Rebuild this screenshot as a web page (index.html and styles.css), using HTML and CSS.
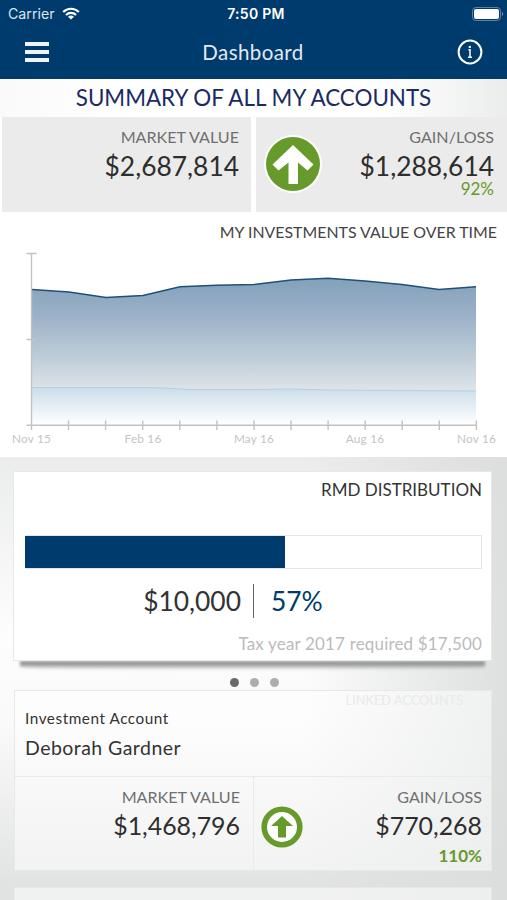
FILE: index.html
```html
<!DOCTYPE html>
<html lang="en">
<head>
  <meta charset="UTF-8">
  <meta name="viewport" content="width=device-width, initial-scale=1.0">
  <title>Dashboard</title>
  <link rel="stylesheet" href="styles.css">
</head>
<body>
  <header class="header">
    <div class="status">
      <div class="carrier">
        <span>Carrier</span>
        <svg width="18" height="13" viewBox="0 0 18 13" fill="none" stroke="#fff" stroke-width="2.2">
          <path d="M1.2 5A11 11 0 0 1 16.8 5M4 8A7 7 0 0 1 14 8"/>
          <path d="M9 12.6L6 9.8A4.4 4.4 0 0 1 12 9.8Z" fill="#fff" stroke="none"/>
        </svg>
      </div>
      <span class="time">7:50 PM</span>
      <svg class="battery" width="32" height="14" viewBox="0 0 32 14">
        <rect x=".5" y=".5" width="28" height="13" rx="3.5" fill="none" stroke="#5f82a4"/>
        <rect x="2" y="2" width="25" height="10" rx="2" fill="#fff"/>
        <path d="M30 5v4c1.6-.8 1.6-3.2 0-4z" fill="#7f9bb8"/>
      </svg>
    </div>
    <nav class="nav">
      <div class="menu"><i></i><i></i><i></i></div>
      <h1 class="nav-title">Dashboard</h1>
      <svg class="info" width="26" height="26" viewBox="0 0 26 26">
        <circle cx="13" cy="13" r="11.4" fill="none" stroke="#fff" stroke-width="2"/>
        <path d="M11.4 10.8h1.6v7.4M11 18.2h4" fill="none" stroke="#fff" stroke-width="1.5"/>
        <circle cx="12.8" cy="7.9" r="1.2" fill="#fff"/>
      </svg>
    </nav>
  </header>

  <h2 class="summary-title"><span>SUMMARY OF ALL MY ACCOUNTS</span></h2>

  <div class="stats">
    <div class="stat">
      <div class="label">MARKET VALUE</div>
      <div class="value">$2,687,814</div>
    </div>
    <div class="stat stat-gain">
      <svg width="58" height="58" viewBox="0 0 58 58">
        <circle cx="29" cy="29" r="29" fill="#fff"/>
        <circle cx="29" cy="29" r="27" fill="#669a2a"/>
        <path d="M29 10L49.5 29.5L43.5 35.5L34 27.5V49H24.5V27.5L14.500 35.5L8.5 29.5Z" fill="#fff"/>
      </svg>
      <div>
        <div class="label">GAIN/LOSS</div>
        <div class="value">$1,288,614</div>
        <div class="percent">92%</div>
      </div>
    </div>
  </div>

  <section class="chart">
    <h3 class="chart-title">MY INVESTMENTS VALUE OVER TIME</h3>
    <svg width="507" height="215" viewBox="0 242 507 215">
      <defs>
        <linearGradient id="total" gradientUnits="userSpaceOnUse" x1="0" y1="278" x2="0" y2="425">
          <stop offset="0" stop-color="#82a1ba"/>
          <stop offset=".25" stop-color="#9bb1c8"/>
          <stop offset=".5" stop-color="#b9c9d6"/>
          <stop offset=".75" stop-color="#dce3e8"/>
          <stop offset="1" stop-color="#fff"/>
        </linearGradient>
        <linearGradient id="invested" x1="0" y1="0" x2="0" y2="1">
          <stop offset="0" stop-color="#cbdde9"/>
          <stop offset="1" stop-color="#fff"/>
        </linearGradient>
      </defs>
      <path d="M32 289.5L69 292L106 297.5L143 295.5L180 286.8L217 285.2L254 284.5L291 280L328 278.2L365 281L402 284.5L439 289.5L476 286.8V425H32Z" fill="url(#total)"/>
      <path d="M32 387.5H153L190 389.5L254 389.5L291 389L328 390L476 391V425H32Z" fill="url(#invested)"/>
      <path d="M32 387.5H153L190 389.5L254 389.5L291 389L328 390L476 391" fill="none" stroke="#b4d0e5"/>
      <path d="M32 289.5L69 292L106 297.5L143 295.5L180 286.8L217 285.2L254 284.5L291 280L328 278.2L365 281L402 284.5L439 289.5L476 286.8" fill="none" stroke="#204f7c" stroke-width="1.5"/>
      <g stroke="#c2c2c2" stroke-width="1.4">
        <path d="M31.5 253V430M26.5 253.5H36.5M26.5 339.5H36.5M26.5 425.3H477"/>
        <path d="M68.5 420.5v9.5M105.6 420.5v9.5M142.7 420.5v9.5M179.8 420.5v9.5M216.9 420.5v9.5M254 420.5v9.5M291 420.5v9.5M328.1 420.5v9.5M365.2 420.5v9.5M402.2 420.5v9.5M439.3 420.5v9.5M476.4 420.5v9.5"/>
      </g>
      <g class="axis-labels">
        <text x="31.5" y="443">Nov 15</text>
        <text x="143" y="443">Feb 16</text>
        <text x="254" y="443">May 16</text>
        <text x="365" y="443">Aug 16</text>
        <text x="476.5" y="443">Nov 16</text>
      </g>
    </svg>
  </section>

  <main class="panel">
    <section class="card rmd">
      <h3 class="rmd-title">RMD DISTRIBUTION</h3>
      <div class="bar"><div class="bar-fill" style="width: 57.1%"></div></div>
      <div class="amounts">
        <span class="amount">$10,000</span>
        <span class="share">57%</span>
      </div>
      <div class="note">Tax year 2017 required $17,500</div>
    </section>
    <div class="dots"><i class="active"></i><i></i><i></i></div>

    <section class="card account">
      <div class="ghost">LINKED ACCOUNTS</div>
      <div class="owner">
        <div class="type">Investment Account</div>
        <div class="name">Deborah Gardner</div>
      </div>
      <div class="figures">
        <div class="figure">
          <div class="label">MARKET VALUE</div>
          <div class="value">$1,468,796</div>
        </div>
        <div class="figure figure-gain">
          <svg width="42" height="42" viewBox="0 0 42 42">
            <circle cx="21" cy="21" r="17.8" fill="#fff" stroke="#669a2a" stroke-width="5.6"/>
            <path d="M21 10L32 20H25V31.5H17V20H10Z" fill="#669a2a"/>
          </svg>
          <div>
            <div class="label">GAIN/LOSS</div>
            <div class="value">$770,268</div>
            <div class="percent">110%</div>
          </div>
        </div>
      </div>
    </section>
    <section class="card next"></section>
  </main>
</body>
</html>
```
FILE: styles.css
```css
* { box-sizing: border-box; }
body { margin: 0; height: 900px; overflow: hidden; font-family: Lato, sans-serif; color: #333; background: #fff; }
h1, h2, h3 { margin: 0; font-weight: normal; }
svg { display: block; flex: none; }

.header { height: 79px; background: #003b6d; color: #fff; }
.status { display: grid; grid-template-columns: 1fr auto 1fr; align-items: center; height: 27px; padding: 0 6px 0 8px; font: 14.2px/27px Inter, sans-serif; }
.carrier { display: flex; align-items: center; gap: 7px; color: #dbe5ee; }
.time { margin-left: 3px; font-size: 14px; font-weight: 600; letter-spacing: .3px; }
.battery { justify-self: end; margin-right: -3px; }
.nav { display: flex; align-items: center; justify-content: space-between; height: 50px; padding: 0 24px 0 25px; }
.menu { display: flex; flex-direction: column; gap: 4px; width: 24px; }
.menu i { height: 4px; background: #eef3f8; }
.nav-title { font-size: 20.5px; line-height: 46px; letter-spacing: .4px; color: #e0e9f2; }

.summary-title { height: 38px; padding-top: 1px; text-align: center; font-size: 22.4px; line-height: 35px; color: #1b2b62; background: linear-gradient(90deg, #f9faf9, #fff 25%, #fff 75%, #ebedec); }

.stats { display: grid; grid-template-columns: 249px 251px; gap: 5px; height: 95px; padding-left: 2px; }
.stat { padding: 10px 12px 0 0; text-align: right; background: #ebebeb; }
.stat-gain { display: flex; justify-content: space-between; padding: 10px 13px 0 8px; }
.stat-gain svg { margin-top: 8px; }
.label { font-size: 16.1px; line-height: 20px; color: #707070; }
.value { margin-top: 5px; font-size: 26.4px; line-height: 28px; color: #2e2e2e; }
.percent { padding-top: 1px; font-size: 17px; line-height: 16px; color: #669a2a; }

.chart { height: 245px; padding-top: 10px; }
.chart-title { padding-right: 10px; text-align: right; font-size: 15.9px; line-height: 20px; color: #444; }
.axis-labels { font-size: 11.8px; letter-spacing: .2px; fill: #c4c4c4; text-anchor: middle; }

.panel {
  height: 443px;
  padding: 14px 15px 0 13px;
  background:
    linear-gradient(90deg, rgba(255, 255, 255, 0) 60%, rgba(218, 221, 220, .9)),
    linear-gradient(180deg, #ebecec, #fdfdfd 40%, #fafafa 60%, #e1e3e2 97%);
}
.card { border: 1px solid #e6e9e8; }
.rmd { position: relative; height: 190px; padding: 8px 9px 0 11px; background: #fff; }
/* lifted paper shadow under the card */
.rmd::after { content: ""; position: absolute; left: 6px; right: 6px; top: 189px; height: 9px; border-radius: 0 0 50% 50% / 0 0 3px 3px; background: linear-gradient(#858686, #9d9e9e 40%, rgba(190, 191, 191, 0)); filter: blur(1.5px); clip-path: inset(0 -8px -6px); }
.rmd-title { text-align: right; font-size: 17px; line-height: 20px; }
.bar { height: 34px; margin-top: 35px; border: 1px solid #e3e6e6; }
.bar-fill { height: 100%; margin-left: -1px; background: #003b6d; }
.amounts { display: flex; height: 34px; margin-top: 15px; font-size: 26.4px; line-height: 34px; }
.amount { width: 229px; padding-right: 12px; text-align: right; border-right: 1.5px solid #666; }
.share { padding-left: 17px; color: #003b6d; }
.note { margin-top: 16px; text-align: right; font-size: 17px; line-height: 20px; letter-spacing: .17px; color: #bbb; }
.dots { display: flex; justify-content: center; gap: 11px; height: 29px; padding: 17px 0 0 3px; }
.dots i { width: 9px; height: 9px; border-radius: 50%; background: #adadad; }
.dots .active { background: #696969; }

.account { position: relative; height: 181px; margin-left: 1px; background: rgba(255, 255, 255, .5); }
.ghost { position: absolute; top: -1px; right: 28px; font-size: 12.8px; line-height: 20px; color: #e9eaea; }
.owner { height: 86px; padding: 17px 0 0 10px; border-bottom: 1px solid #e9ebeb; }
.type { font-size: 15.3px; line-height: 20px; letter-spacing: .55px; }
.name { margin-top: 8px; font-size: 19.5px; line-height: 24px; letter-spacing: .45px; }
.figures { display: grid; grid-template-columns: 239px 1fr; height: 93px; }
.figure { padding: 10px 13px 0 0; text-align: right; border-right: 1px solid #e9ebeb; }
.figure-gain { display: flex; justify-content: space-between; padding: 10px 9px 0 7px; border: 0; }
.figure-gain svg { margin-top: 19px; }
.figure .value { margin-top: 4px; font-size: 24.9px; }
.figure .percent { margin-top: 9px; padding-top: 0; font-weight: bold; }
.next { height: 40px; margin: 16px 0 0 1px; background: rgba(255, 255, 255, .5); }
```
